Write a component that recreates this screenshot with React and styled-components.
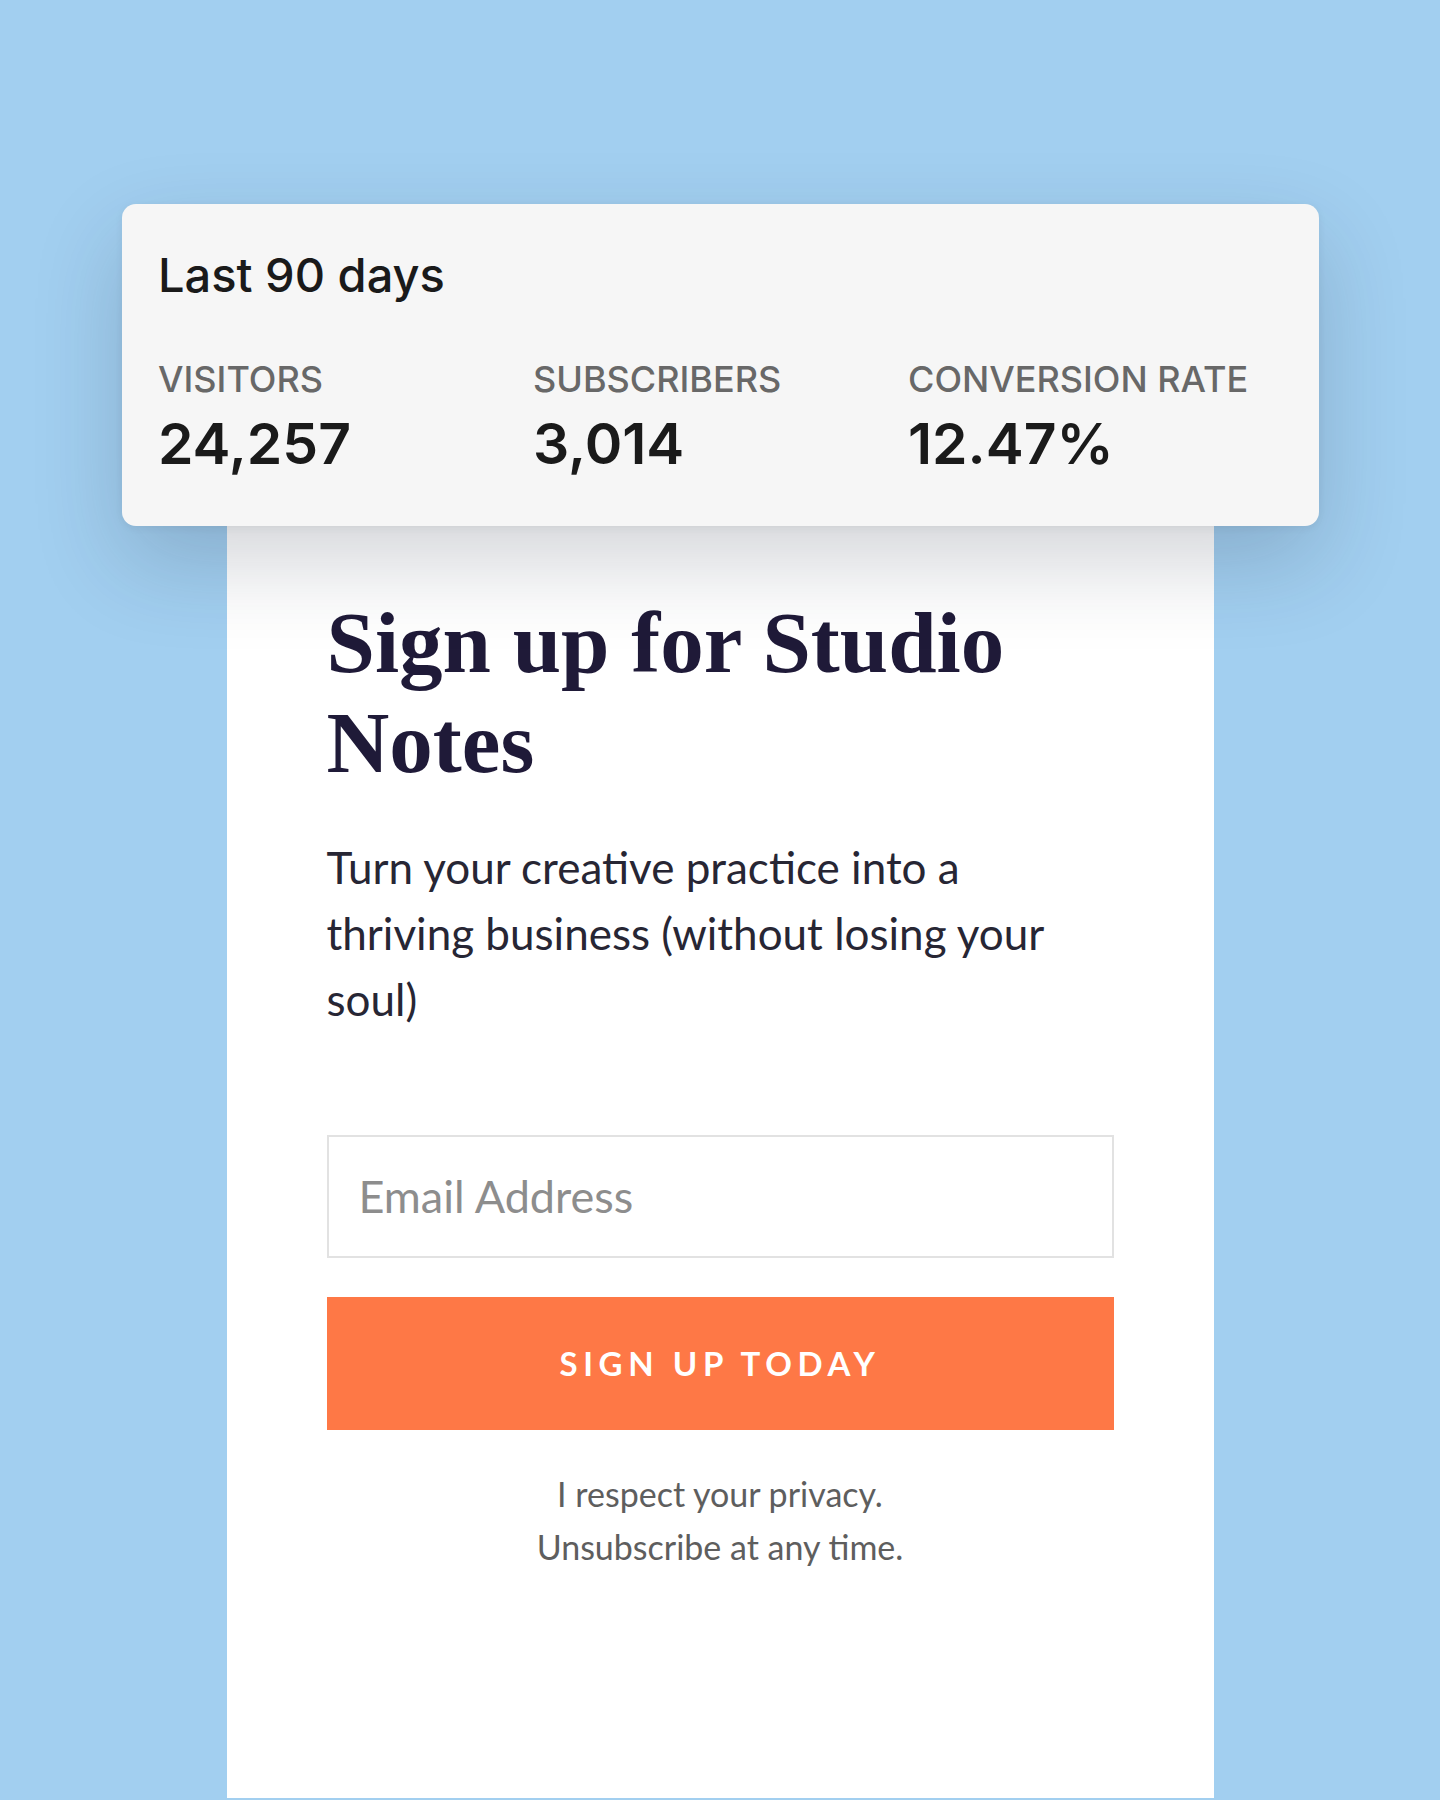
import React from 'react';
import styled, { createGlobalStyle } from 'styled-components';

const GlobalStyle = createGlobalStyle`
    html, body {
        margin: 0;
        padding: 0;
        background: #a2cff0;
    }
    * {
        box-sizing: border-box;
    }
`;

const Page = styled.div`
    min-height: 1800px;
    display: flex;
    flex-direction: column;
    align-items: center;
    padding-top: 204px;
    overflow: hidden;
`;

const StatsCard = styled.section`
    position: relative;
    z-index: 1;
    width: 1197px;
    margin-left: 1px;
    padding: 43px 36px 48px;
    background: #f6f6f6;
    border-radius: 14px;
    box-shadow: 0 36px 90px rgba(30, 40, 60, 0.2), 0 2px 8px rgba(0, 0, 0, 0.06);
    font-family: Inter, 'Noto Sans', sans-serif;
`;

const StatsTitle = styled.h2`
    margin: 0 0 55px;
    font-size: 47px;
    line-height: 1.2;
    font-weight: 500;
    color: #1a1a1a;
`;

const StatsGrid = styled.div`
    display: grid;
    grid-template-columns: repeat(3, 1fr);
`;

const Stat = styled.div`
    display: flex;
    flex-direction: column;
    gap: 8px;
`;

const StatLabel = styled.span`
    font-size: 36px;
    line-height: 1.2;
    font-weight: 500;
    color: #686868;
`;

const StatValue = styled.span`
    font-size: 57px;
    line-height: 1.2;
    font-weight: 600;
    color: #1a1a1a;
`;

const FormCard = styled.section`
    width: 987px;
    min-height: 1272px;
    padding: 67px 100px 80px;
    background: #fff;
    font-family: Lato, 'Open Sans', sans-serif;
`;

const Heading = styled.h1`
    margin: 0 0 41px;
    font-family: 'Liberation Serif', 'DejaVu Serif', serif;
    font-size: 87px;
    line-height: 100px;
    font-weight: 700;
    color: #1f1a38;
`;

const Intro = styled.p`
    margin: 0 0 103px;
    font-size: 44px;
    line-height: 66px;
    color: #272634;
`;

const EmailInput = styled.input`
    display: block;
    width: 100%;
    height: 123px;
    margin: 0 0 39px;
    padding: 0 30px;
    border: 2px solid #e2e2e2;
    border-radius: 0;
    background: #fff;
    font-family: Lato, sans-serif;
    font-size: 45px;
    color: #333;
    outline: none;

    &::placeholder {
        color: #8d8d8d;
    }
`;

const SubmitButton = styled.button`
    display: block;
    width: 100%;
    height: 133px;
    margin: 0 0 37px;
    border: none;
    background: #fe7846;
    color: #fff;
    font-family: Lato, sans-serif;
    font-size: 33px;
    font-weight: 700;
    letter-spacing: 5.6px;
    text-transform: uppercase;
`;

const Privacy = styled.p`
    margin: 0;
    text-align: center;
    font-size: 34px;
    line-height: 53px;
    color: #5e5e5e;
`;

const stats = [
    { label: 'VISITORS', value: '24,257' },
    { label: 'SUBSCRIBERS', value: '3,014' },
    { label: 'CONVERSION RATE', value: '12.47%' },
];

export default function App() {
    return (
        <>
            <GlobalStyle />
            <Page>
                <StatsCard>
                    <StatsTitle>Last 90 days</StatsTitle>
                    <StatsGrid>
                        {stats.map((s) => (
                            <Stat key={s.label}>
                                <StatLabel>{s.label}</StatLabel>
                                <StatValue>{s.value}</StatValue>
                            </Stat>
                        ))}
                    </StatsGrid>
                </StatsCard>
                <FormCard>
                    <Heading>Sign up for Studio Notes</Heading>
                    <Intro>
                        Turn your creative practice into a thriving business (without losing your soul)
                    </Intro>
                    <EmailInput type="email" placeholder="Email Address" />
                    <SubmitButton>Sign up today</SubmitButton>
                    <Privacy>
                        I respect your privacy.
                        <br />
                        Unsubscribe at any time.
                    </Privacy>
                </FormCard>
            </Page>
        </>
    );
}
